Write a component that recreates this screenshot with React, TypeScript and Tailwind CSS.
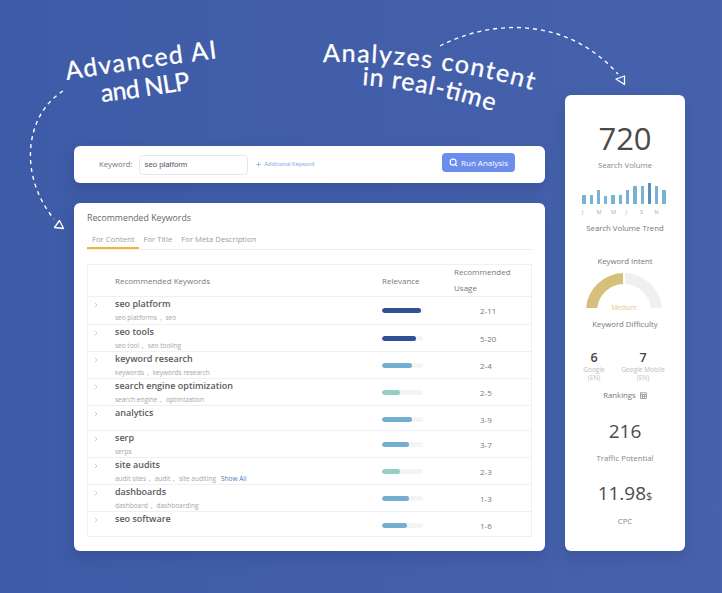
import React from 'react';
import { ChevronRight, Plus, Search } from 'lucide-react';

const KEYWORDS = [
  { name: 'seo platform', variants: 'seo platforms， seo', pct: 95, color: 'bg-[#2f5296]', usage: '2-11', height: 'h-[27.5px]' },
  { name: 'seo tools', variants: 'seo tool， seo tooling', pct: 83, color: 'bg-[#2f5296]', usage: '5-20', height: 'h-[27.5px]' },
  { name: 'keyword research', variants: 'keywords， keywords research', pct: 72, color: 'bg-[#74aed0]', usage: '2-4', height: 'h-[27px]' },
  { name: 'search engine optimization', variants: 'search engine， optimization', pct: 44, color: 'bg-[#94cfc2]', usage: '2-5', height: 'h-[27px]' },
  { name: 'analytics', variants: '', pct: 72, color: 'bg-[#74aed0]', usage: '3-9', height: 'h-[25px]' },
  { name: 'serp', variants: 'serps', pct: 66, color: 'bg-[#74aed0]', usage: '3-7', height: 'h-[27px]' },
  { name: 'site audits', variants: 'audit sites， audit， site auditing', pct: 44, color: 'bg-[#94cfc2]', usage: '2-3', height: 'h-[27px]', more: true },
  { name: 'dashboards', variants: 'dashboard， dashboarding', pct: 66, color: 'bg-[#74aed0]', usage: '1-3', height: 'h-[27px]' },
  { name: 'seo software', variants: '', pct: 62, color: 'bg-[#74aed0]', usage: '1-6', height: 'h-[25px]' },
];

const TREND = [9, 9, 14, 8, 9, 9, 14, 18, 18, 21, 18, 14];
const MONTHS = ['J', 'M', 'M', 'J', 'S', 'N'];

function KeywordRow({ row }: { row: (typeof KEYWORDS)[number] }) {
  return (
    <div className={`grid grid-cols-[27px_267px_71px_1fr] border-b border-[#eef0f5] ${row.height}`}>
      <div className="pl-[4px] pt-[3px] text-[#9a9a9a]">
        <ChevronRight size={8} strokeWidth={1.5} className="mt-[1px]" />
      </div>
      <div className="min-w-0">
        <p className="text-[9px] leading-[13px] font-semibold text-[#5a5a5a] whitespace-nowrap">{row.name}</p>
        {row.variants && (
          <p className="mt-[3px] text-[6.5px] leading-[10px] text-[#a5a5a5] whitespace-pre">
            {row.variants}
            {row.more && <span className="ml-[5px] text-[#4a7ab5]">Show All</span>}
          </p>
        )}
      </div>
      <div className="pt-[11px]">
        <div className="h-[5px] w-[41px] overflow-hidden rounded-full bg-[#f3f4f4]">
          <div className={`h-full rounded-full ${row.color}`} style={{ width: `${row.pct}%` }} />
        </div>
      </div>
      <div className="pt-[8px] pl-[27px] text-[8px] leading-[11px] text-[#777]">{row.usage}</div>
    </div>
  );
}

export default function App() {
  return (
    <div className="relative h-[593px] w-[722px] overflow-hidden bg-linear-to-r from-[#3e5ba7] to-[#4762ac] font-['Open_Sans',sans-serif]">
      <div className="flex gap-5 pl-[74px]">
        {/* Left column */}
        <div className="mt-[146px] flex w-[471px] flex-col gap-5">
          <div className="flex h-[37px] items-center rounded-md bg-white pl-[25px] pr-[30px] shadow-[0_6px_14px_rgba(30,50,110,0.25)]">
            <span className="text-[7.75px] text-[#777]">Keyword:</span>
            <div className="ml-[6px] flex h-[20px] w-[109px] items-center rounded-sm border border-[#e6e8f0] pl-[5px] font-['Liberation_Sans',sans-serif] text-[7.75px] text-[#555]">
              seo platform
            </div>
            <Plus size={7} strokeWidth={2} className="ml-[7px] text-[#6f93e6]" />
            <span className="ml-[3px] text-[5.5px] text-[#7d9be8]">Additional Keyword</span>
            <button className="mb-[4px] ml-auto flex h-[19px] w-[73px] items-center justify-center gap-[3px] rounded-sm bg-[#6b8eec] text-[8px] text-white">
              <Search size={9} strokeWidth={3} />
              Run Analysis
            </button>
          </div>

          <div className="h-[348px] rounded-md bg-white px-[13px] pt-[9px] shadow-[0_6px_14px_rgba(30,50,110,0.25)]">
            <h2 className="text-[8.75px] leading-[13px] text-[#666]">Recommended Keywords</h2>
            <div className="mt-[8px] flex h-[17px] gap-[9px] border-b border-[#eeeeee] pl-[5px] text-[7.7px] leading-[12px] text-[#9a9cab]">
              <span className="relative">
                For Content
                <span className="absolute -left-[5px] -right-[5px] top-[14px] h-[2px] bg-[#eeb63f]" />
              </span>
              <span>For Title</span>
              <span>For Meta Description</span>
            </div>
            <div className="mt-[14px] h-[273px] border border-[#eef0f5]">
              <div className="grid h-[32px] grid-cols-[27px_267px_71px_1fr] border-b border-[#eef0f5] text-[8px] text-[#777]">
                <div />
                <div className="pt-[10px]">Recommended Keywords</div>
                <div className="pt-[10px]">Relevance</div>
                <div className="ml-[1px] leading-[16px] -mt-[1px]">
                  Recommended
                  <br />
                  Usage
                </div>
              </div>
              {KEYWORDS.map(row => (
                <KeywordRow key={row.name} row={row} />
              ))}
            </div>
          </div>
        </div>

        {/* Right column */}
        <div className="mt-[95px] flex h-[456px] w-[120px] flex-col items-center rounded-md bg-white pt-[25px] text-center shadow-[0_6px_14px_rgba(30,50,110,0.25)]">
          <div className="text-[31px] leading-[36px] text-[#4a4a4a]">720</div>
          <div className="mt-[3.5px] text-[7.75px] leading-[11px] text-[#888]">Search Volume</div>
          <div className="mr-[2px] mt-[12.5px] flex h-[21px] items-end gap-[4px]">
            {TREND.map((h, i) => (
              <div
                key={i}
                className={`w-[3.3px] ${i === 9 ? 'bg-[#5b8fbd]' : 'bg-[#79b3d2]'}`}
                style={{ height: h }}
              />
            ))}
          </div>
          <div className="mt-[4px] flex w-[88px] pl-[1px] text-[5.5px] leading-[8px] text-[#aaa]">
            {MONTHS.map((m, i) => (
              <span key={i} className="w-[14.6px] text-left">{m}</span>
            ))}
          </div>
          <div className="mt-[6.5px] text-[7.75px] leading-[11px] text-[#777]">Search Volume Trend</div>
          <div className="mt-[22px] text-[7.75px] leading-[11px] text-[#777]">Keyword Intent</div>
          <div className="relative mr-[2px] mt-[6.5px] h-[35px] w-[76px]">
            <svg width="76" height="35" viewBox="0 0 76 35">
              <path d="M0.1 35 A38 38 0 0 1 37 0 L37 11 A27 27 0 0 0 11.2 35 Z" fill="#d5bf7b" />
              <path d="M39 0 A38 38 0 0 1 75.9 35 L64.8 35 A27 27 0 0 0 39 11 Z" fill="#f0f0f0" />
            </svg>
            <span className="absolute inset-x-0 bottom-[-3.5px] text-[6.5px] leading-[9px] text-[#dcc98e]">Medium</span>
          </div>
          <div className="mt-[10.5px] text-[7.75px] leading-[11px] text-[#777]">Keyword Difficulty</div>
          <div className="mt-[20.5px] flex w-full gap-[6px] pl-[9px]">
            <div className="w-[40px]">
              <div className="text-[12.5px] leading-[16px] font-semibold text-[#444]">6</div>
              <div className="text-[6.5px] leading-[8px] text-[#bbb]">Google<br />(EN)</div>
            </div>
            <div className="w-[46px]">
              <div className="text-[12.5px] leading-[16px] font-semibold text-[#444]">7</div>
              <div className="text-[6.5px] leading-[8px] text-[#bbb] whitespace-nowrap">Google Mobile<br />(EN)</div>
            </div>
          </div>
          <div className="mt-[7.5px] flex items-center gap-[4px] text-[7.75px] leading-[11px] text-[#777]">
            Rankings
            <svg width="7" height="7" viewBox="0 0 7 7" fill="none" stroke="#888" strokeWidth="0.7">
              <rect x="0.5" y="0.8" width="6" height="5.6" />
              <path d="M0.5 2.4H6.5M0.5 4.2H6.5M2.5 2.4V6.4M4.5 2.4V6.4" />
            </svg>
          </div>
          <div className="mt-[17.5px] text-[19px] leading-[26px] font-medium text-[#4a4a4a]">216</div>
          <div className="mt-[8.5px] text-[7.75px] leading-[11px] text-[#888]">Traffic Potential</div>
          <div className="mt-[16.5px] text-[19px] leading-[26px] font-medium text-[#4a4a4a]">
            11.98<span className="text-[11px]">$</span>
          </div>
          <div className="mt-[6.5px] text-[7.75px] leading-[11px] text-[#888]">CPC</div>
        </div>
      </div>

      {/* Handwritten callouts */}
      <svg className="absolute inset-0" width="722" height="593" viewBox="0 0 722 593" fill="none">
        <defs>
          <path id="line-ai" d="M67 80 Q140 68 219 58" />
          <path id="line-nlp" d="M102 102 Q145 97 192 89" />
          <path id="line-content" d="M323 62 Q430 60 532 90" />
          <path id="line-realtime" d="M362 85 Q430 90 495 112" />
        </defs>
        <g fill="white" stroke="white" strokeWidth="0.3" fontFamily="Lato, sans-serif" fontSize="25">
          <text><textPath href="#line-ai" textLength="152">Advanced AI</textPath></text>
          <text><textPath href="#line-nlp" textLength="90">and NLP</textPath></text>
          <text><textPath href="#line-content" textLength="212">Analyzes content</textPath></text>
          <text><textPath href="#line-realtime" textLength="134">in real-time</textPath></text>
        </g>
        <g stroke="white" strokeWidth="1.4" strokeDasharray="4 4">
          <path d="M63 91 C25 115 18 175 54 219" />
          <path d="M440 46 C490 20 565 15 618 74" />
        </g>
        <g stroke="white" strokeWidth="1.3" strokeLinejoin="round">
          <path d="M59.5 220.5 L54.5 227.5 L63.5 228.5 Z" />
          <path d="M616 79 L624.5 76 L624.5 84.5 Z" />
        </g>
      </svg>
    </div>
  );
}
